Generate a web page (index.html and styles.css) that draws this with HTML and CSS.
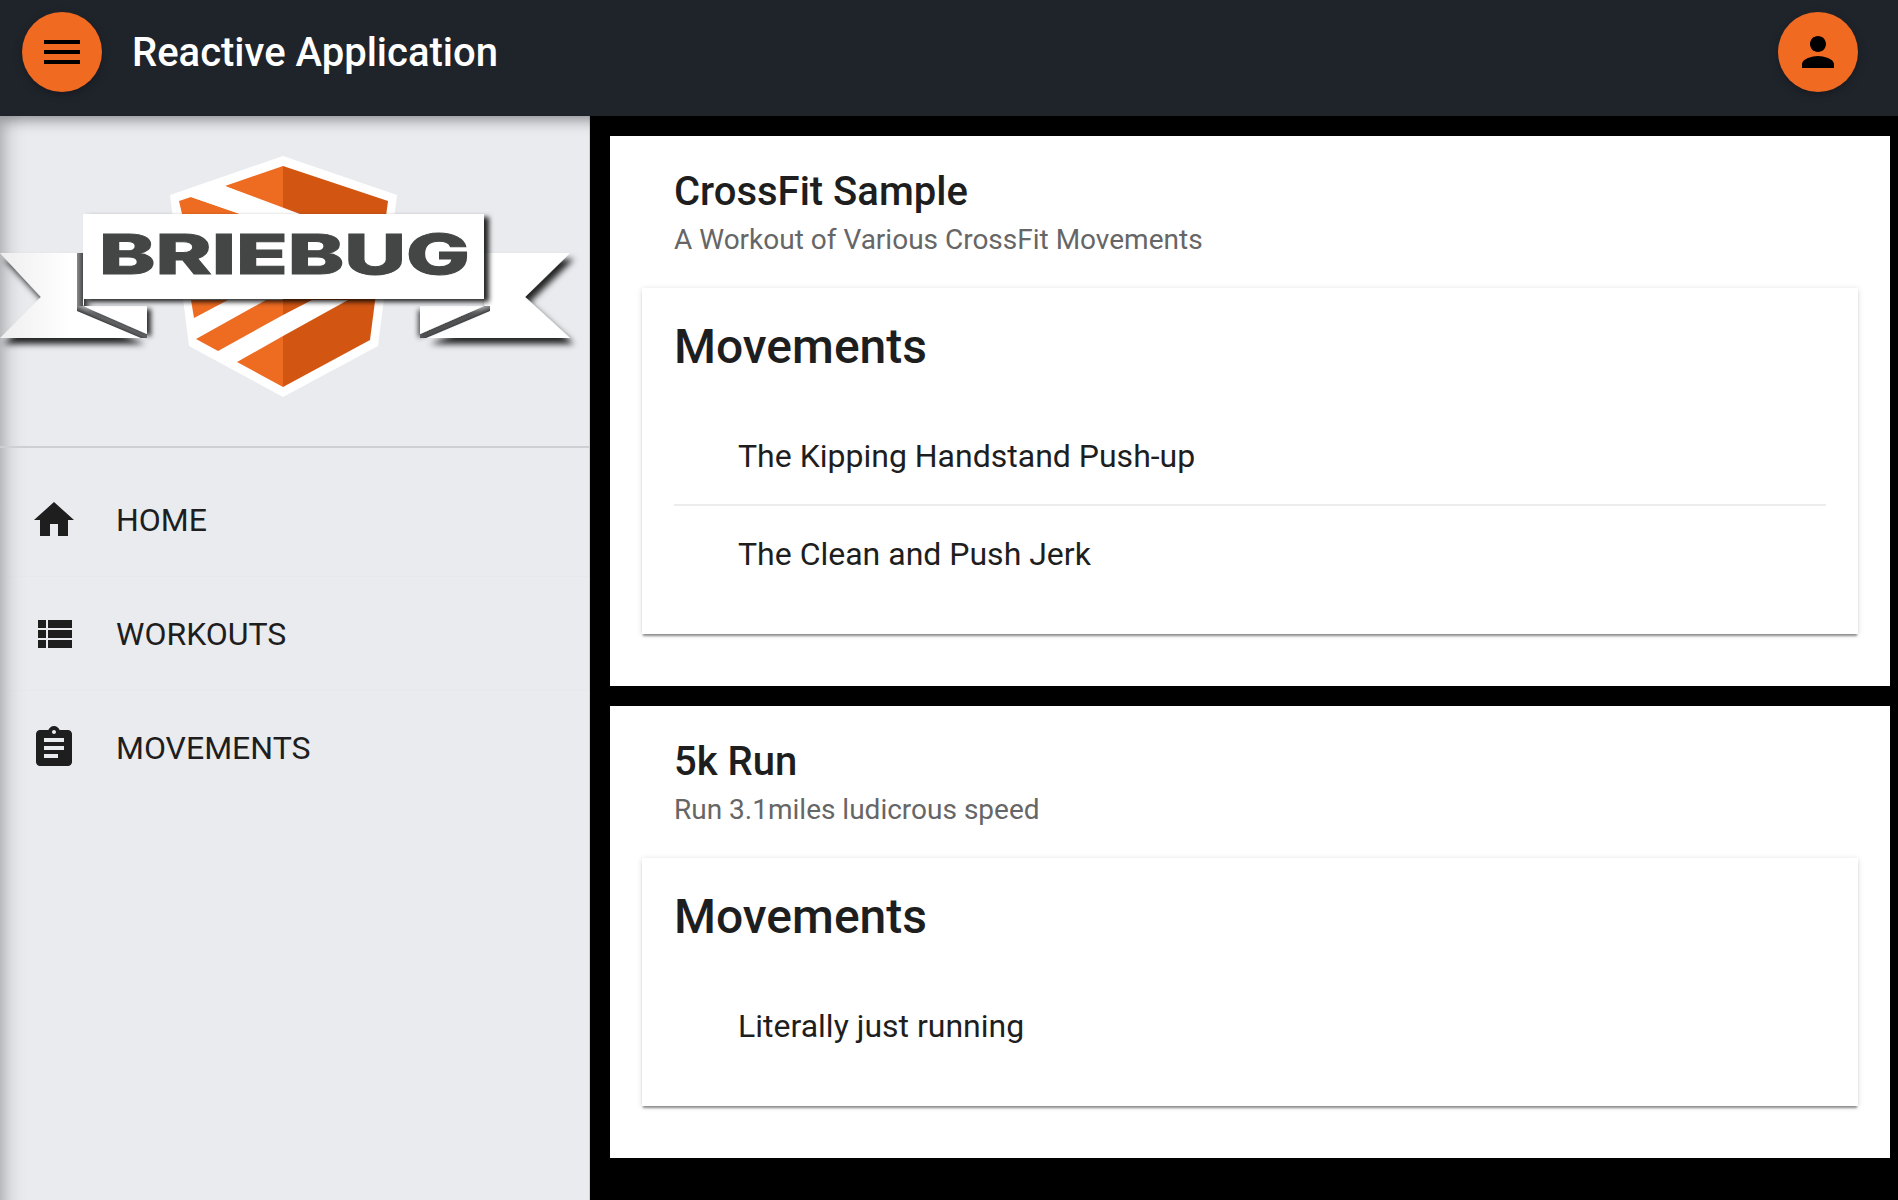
FILE: index.html
```html
<!DOCTYPE html>
<html lang="en">
<head>
<meta charset="utf-8">
<title>Reactive Application</title>
<link rel="stylesheet" href="styles.css">
</head>
<body>
<header class="toolbar">
  <button class="fab" aria-label="Menu"><svg class="icon" viewBox="0 0 24 24"><path d="M3 18h18v-2H3v2zm0-5h18v-2H3v2zm0-7v2h18V6H3z"/></svg></button>
  <span class="app-title">Reactive Application</span>
  <button class="fab fab-end" aria-label="Account"><svg class="icon" viewBox="0 0 24 24"><path d="M12 12c2.21 0 4-1.79 4-4s-1.79-4-4-4-4 1.79-4 4 1.79 4 4 4zm0 2c-2.67 0-8 1.34-8 4v2h16v-2c0-2.66-5.33-4-8-4z"/></svg></button>
</header>
<div class="layout">
  <aside class="sidebar">
    <div class="logo">
      <svg class="logo-art" viewBox="0 116 589 331" aria-label="Briebug">
        <defs>
          <filter id="ribbon-shadow" x="-10%" y="-10%" width="125%" height="135%"><feDropShadow dx="4" dy="6" stdDeviation="3.2" flood-color="#000" flood-opacity=".85"/></filter>
          <filter id="fold-shadow" x="-20%" y="-20%" width="160%" height="170%"><feDropShadow dx="4" dy="3" stdDeviation="2.8" flood-color="#000" flood-opacity=".8"/></filter>
          <filter id="fold-shadow-end" x="-30%" y="-20%" width="160%" height="170%"><feDropShadow dx="-2" dy="4" stdDeviation="2.6" flood-color="#000" flood-opacity=".65"/></filter>
          <filter id="banner-shadow" x="-5%" y="-10%" width="110%" height="125%"><feDropShadow dx="5" dy="3" stdDeviation="2.4" flood-color="#000" flood-opacity=".85"/></filter>
          <linearGradient id="tail-left" x1="0" x2="1" y1="0" y2="0"><stop offset="0" stop-color="#eeeeee"/><stop offset=".5" stop-color="#fff"/></linearGradient>
          <linearGradient id="edge-left" x1="0" x2="1" y1="0" y2="0"><stop offset="0" stop-color="#8a8c8e"/><stop offset="1" stop-color="#47494b"/></linearGradient>
          <linearGradient id="fold-left" gradientUnits="userSpaceOnUse" x1="115" y1="319" x2="112" y2="326"><stop offset="0" stop-color="#b4b5b7"/><stop offset="1" stop-color="#3a3c3e"/></linearGradient>
          <linearGradient id="fold-right" gradientUnits="userSpaceOnUse" x1="452" y1="319" x2="455" y2="326"><stop offset="0" stop-color="#b4b5b7"/><stop offset="1" stop-color="#3a3c3e"/></linearGradient>
        </defs>
        <polygon class="white" points="283,156 397,195 378,346 283,397 189,346 170,195"/>
        <polygon class="dark" points="283,166 388,201 370,340 283,387"/>
        <polygon class="light" points="283,166 225,186 283,210"/>
        <polygon class="light" points="179,201 191,197 240,214 182,214"/>
        <polygon class="light" points="191,300 228,300 194,318"/>
        <polygon class="light" points="196,339 218,351 283,315 283,300 266,300"/>
        <polygon class="light" points="237,362 283,387 283,336"/>
        <polygon class="white" points="225,186 191,197 240,214 300,214"/>
        <polygon class="white" points="348,300 312,300 283,315 283,336"/>
        <g filter="url(#ribbon-shadow)">
          <polygon class="tail-left" points="0,253 84,253 84,305 77,310 141,338 0,338 41,297"/>
          <polygon class="white" points="570,253 484,253 484,305 490,310 426,338 570,338 525,297"/>
        </g>
        <rect class="edge" x="77" y="253" width="6" height="55"/>
        <polygon class="fold-left" points="77,306 83,306 147,334 147,338 141,338 77,311"/>
        <polygon class="fold-right" points="490,306 484,306 420,334 420,338 426,338 490,311"/>
        <polygon class="white" points="83,306 147,306 147,334" filter="url(#fold-shadow)"/>
        <polygon class="white" points="484,306 420,306 420,334" filter="url(#fold-shadow-end)"/>
        <rect class="white" x="83" y="214" width="401" height="85" filter="url(#banner-shadow)"/>
        <text class="logo-word" x="99" y="274" textLength="371" lengthAdjust="spacingAndGlyphs">BRIEBUG</text>
      </svg>
    </div>
    <nav class="nav">
      <a class="nav-item"><svg class="icon" viewBox="0 0 24 24"><path d="M10 20v-6h4v6h5v-8h3L12 3 2 12h3v8z"/></svg><span>HOME</span></a>
      <a class="nav-item"><svg class="icon" viewBox="0 0 24 24"><path d="M4 14h4v-4H4v4zm0 5h4v-4H4v4zM4 9h4V5H4v4zm5 5h12v-4H9v4zm0 5h12v-4H9v4zM9 5v4h12V5H9z"/></svg><span>WORKOUTS</span></a>
      <a class="nav-item"><svg class="icon" viewBox="0 0 24 24"><path d="M19 3h-4.18C14.4 1.84 13.3 1 12 1c-1.3 0-2.4.84-2.82 2H5c-1.1 0-2 .9-2 2v14c0 1.1.9 2 2 2h14c1.1 0 2-.9 2-2V5c0-1.1-.9-2-2-2zm-7 0c.55 0 1 .45 1 1s-.45 1-1 1-1-.45-1-1 .45-1 1-1zm2 14H7v-2h7v2zm3-4H7v-2h10v2zm0-4H7V7h10v2z"/></svg><span>MOVEMENTS</span></a>
    </nav>
  </aside>
  <main class="content">
    <section class="card">
      <header class="card-header">
        <h2 class="card-title">CrossFit Sample</h2>
        <p class="card-subtitle">A Workout of Various CrossFit Movements</p>
      </header>
      <div class="inner-card">
        <h1 class="inner-title">Movements</h1>
        <ul class="list">
          <li class="list-item">The Kipping Handstand Push-up</li>
          <li class="list-item">The Clean and Push Jerk</li>
        </ul>
      </div>
    </section>
    <section class="card">
      <header class="card-header">
        <h2 class="card-title">5k Run</h2>
        <p class="card-subtitle">Run 3.1miles ludicrous speed</p>
      </header>
      <div class="inner-card">
        <h1 class="inner-title">Movements</h1>
        <ul class="list">
          <li class="list-item">Literally just running</li>
        </ul>
      </div>
    </section>
  </main>
</div>
</body>
</html>
```
FILE: styles.css
```css
* { box-sizing: border-box; }
html, body { margin: 0; height: 100%; }
body {
  background: #000;
  font-family: Roboto, "Liberation Sans", sans-serif;
  color: #1e1e1e;
  overflow: hidden;
}
.icon { width: 48px; height: 48px; display: block; fill: currentColor; flex: none; }

.toolbar {
  position: relative;
  z-index: 2;
  height: 116px;
  display: flex;
  align-items: center;
  gap: 30px;
  padding: 12px 40px 24px 22px;
  background: #1f242b;
  color: #fff;
  box-shadow: 0 3px 14px rgba(0, 0, 0, .45);
}
.fab {
  width: 80px;
  height: 80px;
  padding: 0;
  border: 0;
  border-radius: 50%;
  display: flex;
  align-items: center;
  justify-content: center;
  background: #f06a22;
  color: #000;
  box-shadow: 0 3px 8px rgba(0, 0, 0, .25);
}
.fab-end { margin-left: auto; }
.app-title { font-size: 40px; font-weight: 500; }

.layout {
  display: grid;
  grid-template-columns: 590px 1fr;
  height: calc(100vh - 116px);
}
.sidebar {
  border-right: 1px solid #cfd1d5;
  background: linear-gradient(to right, #b8babd 0, #cbcdd0 6px, #dcdee2 12px, #e6e8ec 20px, #e9ebef 28px);
}
.logo { height: 332px; border-bottom: 2px solid #cdcfd3; }
.logo-art { display: block; width: 589px; height: 331px; }
.white { fill: #fff; }
.dark { fill: #d25612; }
.light { fill: #ee6b22; }
.tail-left { fill: url(#tail-left); }
.fold-left { fill: url(#fold-left); }
.fold-right { fill: url(#fold-right); }
.edge { fill: url(#edge-left); }
.logo-word {
  font-family: Inter, "DejaVu Sans", sans-serif;
  font-weight: 800;
  font-size: 55px;
  fill: #444646;
  stroke: #444646;
  stroke-width: 1px;
}
.nav { padding-top: 15px; }
.nav-item {
  height: 114px;
  display: flex;
  align-items: center;
  gap: 38px;
  padding-left: 30px;
  font-size: 32px;
  color: #1e1e1e;
  border-bottom: 1px solid rgba(210, 220, 190, .08);
}
.nav-item:last-child { border-bottom: 0; }

.content {
  display: flex;
  flex-direction: column;
  gap: 20px;
  padding: 20px 8px 0 20px;
  overflow: hidden;
}
.card {
  background: #fff;
  padding: 0 32px 52px;
}
.card-header { height: 152px; padding: 33px 32px 0; }
.card-title { margin: 0; font-size: 40px; font-weight: 500; line-height: 46px; }
.card-subtitle { margin: 8px 0 0; font-size: 28px; line-height: 34px; color: #666; }
.inner-card {
  padding: 0 32px 31px;
  background: #fff;
  box-shadow: 0 3px 2px -1px rgba(0, 0, 0, .4), 0 1px 6px rgba(0, 0, 0, .14);
}
.inner-title { margin: 0; height: 119px; font-size: 48px; font-weight: 500; line-height: 118px; }
.list { margin: 0; padding: 0; list-style: none; }
.list-item {
  height: 98px;
  padding-left: 64px;
  font-size: 32px;
  line-height: 98px;
  color: #1e1e1e;
}
.list-item:not(:last-child) { border-bottom: 1px solid #ececec; line-height: 98px; }
.list-item + .list-item { border-top: 1px solid #ececec; line-height: 97px; }
```
